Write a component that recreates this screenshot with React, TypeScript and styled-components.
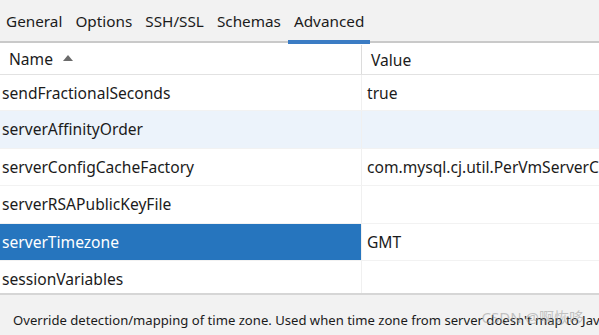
import React from 'react';
import styled, { createGlobalStyle } from 'styled-components';

const GlobalStyle = createGlobalStyle`
  html, body {
    margin: 0;
    padding: 0;
    background: #ffffff;
  }
  body {
    font-family: 'Noto Sans', 'Open Sans', sans-serif;
    color: #1b1b1b;
  }
`;

const Frame = styled.div`
  width: 599px;
  height: 335px;
  display: flex;
  flex-direction: column;
  overflow: hidden;
  position: relative;
  background: #ffffff;
`;

const TabBar = styled.div`
  height: 41px;
  flex-shrink: 0;
  display: flex;
  align-items: flex-end;
  background: #f2f2f2;
  border-bottom: 2px solid #c9c9c9;
`;

const Tab = styled.div<{ $active?: boolean }>`
  position: relative;
  height: 41px;
  display: flex;
  align-items: center;
  padding: 0 6px 0 6px;
  font-size: 15.3px;
  color: #1b1b1b;
  margin-right: 1px;

  &::after {
    content: '';
    position: absolute;
    left: 0;
    right: 0;
    bottom: -3px;
    height: 4px;
    background: ${(p) => (p.$active ? '#3b7cc4' : 'transparent')};
  }
`;

const Table = styled.div`
  height: 250px;
  flex-shrink: 0;
  display: flex;
  flex-direction: column;
  overflow: hidden;
`;

const HeaderRow = styled.div`
  height: 31px;
  flex-shrink: 0;
  display: grid;
  grid-template-columns: 362px 1fr;
  border-bottom: 1px solid #e2e2e2;
`;

const HeaderCell = styled.div<{ $divider?: boolean }>`
  display: flex;
  align-items: center;
  gap: 10px;
  padding-left: 9px;
  font-size: 15.6px;
  border-left: ${(p) => (p.$divider ? '1px solid #dcdcdc' : 'none')};
  margin: ${(p) => (p.$divider ? '2px 0 0 -1px' : '0')};
`;

const SortArrow = styled.span`
  width: 0;
  height: 0;
  border-left: 5px solid transparent;
  border-right: 5px solid transparent;
  border-bottom: 6px solid #6b6b6b;
  margin-top: -2px;
`;

const Row = styled.div<{ $hover?: boolean }>`
  height: 36.5px;
  flex-shrink: 0;
  display: grid;
  grid-template-columns: 361px 1fr;
  border-bottom: 1px solid #f2f2f2;
  background: ${(p) => (p.$hover ? '#ecf3fb' : '#ffffff')};

  &:nth-child(2) {
    height: 35px;
  }
`;

const Cell = styled.div<{ $selected?: boolean; $value?: boolean }>`
  display: flex;
  align-items: center;
  padding-left: ${(p) => (p.$value ? '5px' : '2px')};
  font-size: 15.6px;
  white-space: nowrap;
  overflow: hidden;
  color: ${(p) => (p.$selected ? '#ffffff' : '#1b1b1b')};
  background: ${(p) => (p.$selected ? '#2675be' : 'transparent')};
  border-left: ${(p) => (p.$value ? '1px solid #f0f0f0' : 'none')};
`;

const Description = styled.div`
  flex: 1;
  background: #f2f2f2;
  border-top: 2px solid #d6d6d6;
  padding: 16px 0 0 13px;
  font-size: 13.1px;
  white-space: nowrap;
  overflow: hidden;
  color: #1b1b1b;
`;

const Watermark = styled.div`
  position: absolute;
  right: 15px;
  bottom: 8px;
  font-size: 15px;
  color: rgba(150, 150, 150, 0.55);
  font-family: 'Noto Sans', 'Noto Sans CJK SC', sans-serif;
`;

const tabs = ['General', 'Options', 'SSH/SSL', 'Schemas', 'Advanced'];

const rows: { name: string; value: string; hover?: boolean; selected?: boolean }[] = [
  { name: 'sendFractionalSeconds', value: 'true' },
  { name: 'serverAffinityOrder', value: '', hover: true },
  { name: 'serverConfigCacheFactory', value: 'com.mysql.cj.util.PerVmServerConfigCacheFactory' },
  { name: 'serverRSAPublicKeyFile', value: '' },
  { name: 'serverTimezone', value: 'GMT', selected: true },
  { name: 'sessionVariables', value: '' },
];

export default function App() {
  return (
    <>
      <GlobalStyle />
      <Frame>
        <TabBar>
          {tabs.map((t) => (
            <Tab key={t} $active={t === 'Advanced'}>
              {t}
            </Tab>
          ))}
        </TabBar>
        <Table>
          <HeaderRow>
            <HeaderCell>
              Name <SortArrow />
            </HeaderCell>
            <HeaderCell $divider>Value</HeaderCell>
          </HeaderRow>
          {rows.map((r) => (
            <Row key={r.name} $hover={r.hover}>
              <Cell $selected={r.selected}>{r.name}</Cell>
              <Cell $value>{r.value}</Cell>
            </Row>
          ))}
        </Table>
        <Description>
          Override detection/mapping of time zone. Used when time zone from server doesn't map to Java time zone
        </Description>
        <Watermark>CSDN @啊恢哆</Watermark>
      </Frame>
    </>
  );
}
